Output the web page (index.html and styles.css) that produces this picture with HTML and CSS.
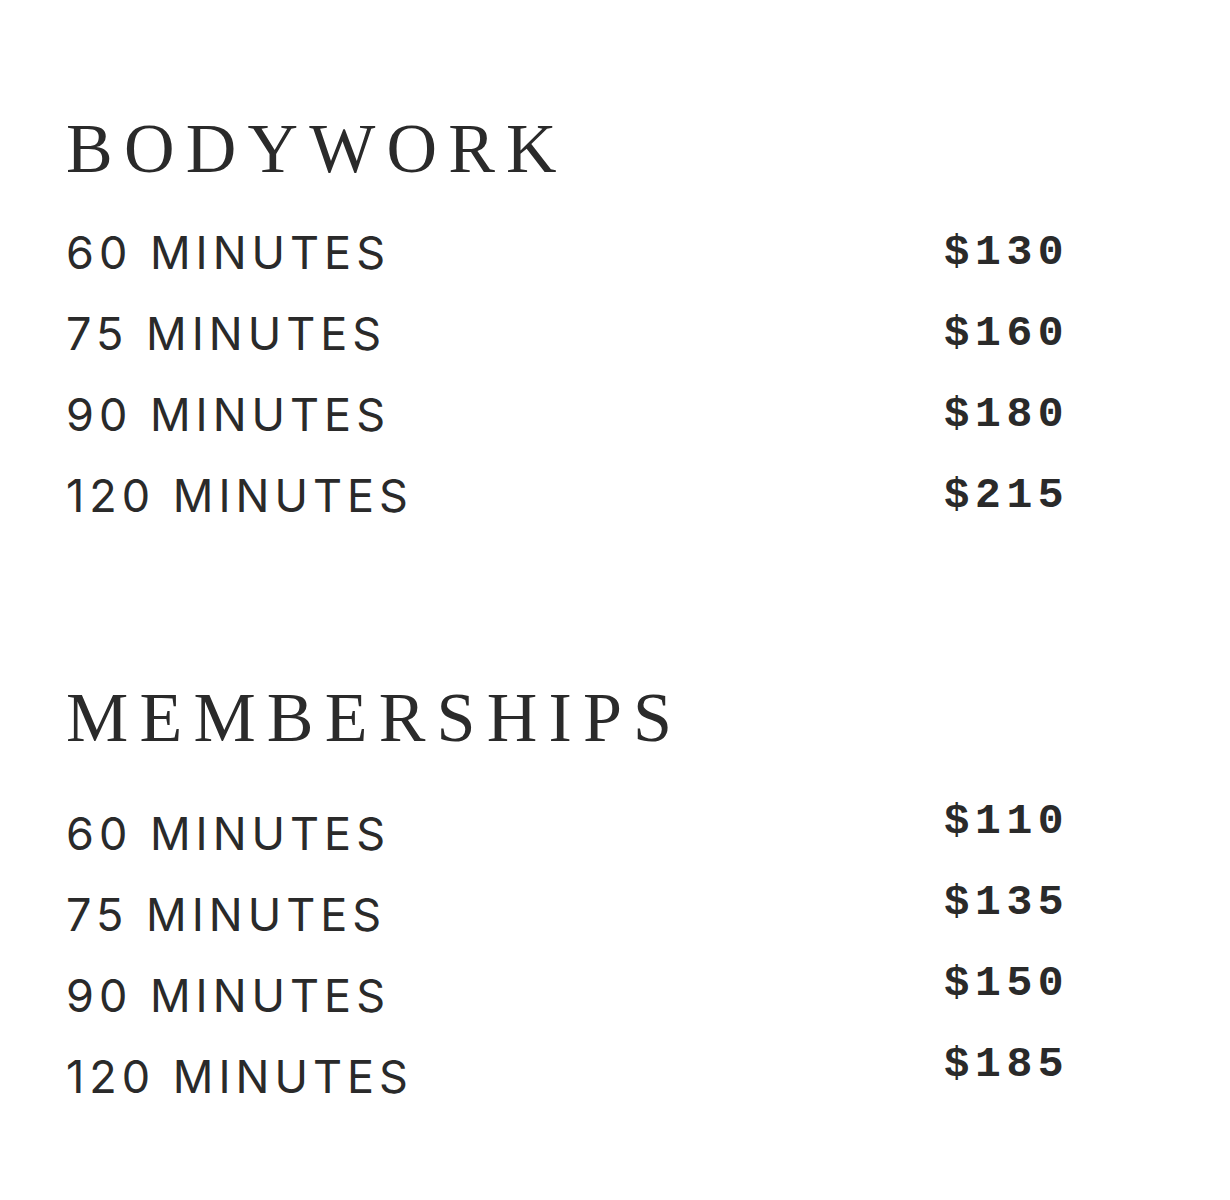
FILE: index.html
```html
<!DOCTYPE html>
<html lang="en">
<head>
<meta charset="utf-8">
<title>Pricing</title>
<link rel="stylesheet" href="styles.css">
</head>
<body>
<main class="menu">
  <section class="section">
    <h2 class="title">BODYWORK</h2>
    <div class="rows">
      <div class="row"><span class="label">60 MINUTES</span><span class="price">$130</span></div>
      <div class="row"><span class="label">75 MINUTES</span><span class="price">$160</span></div>
      <div class="row"><span class="label">90 MINUTES</span><span class="price">$180</span></div>
      <div class="row"><span class="label">120 MINUTES</span><span class="price">$215</span></div>
    </div>
  </section>
  <section class="section section--members">
    <h2 class="title">MEMBERSHIPS</h2>
    <div class="rows">
      <div class="row"><span class="label">60 MINUTES</span><span class="price">$110</span></div>
      <div class="row"><span class="label">75 MINUTES</span><span class="price">$135</span></div>
      <div class="row"><span class="label">90 MINUTES</span><span class="price">$150</span></div>
      <div class="row"><span class="label">120 MINUTES</span><span class="price">$185</span></div>
    </div>
  </section>
</main>
</body>
</html>
```
FILE: styles.css
```css
html, body {
  margin: 0;
  padding: 0;
  background: #ffffff;
}
body {
  color: #2a2a2a;
}
.menu {
  padding: 113px 0 0 66px;
  width: 1003px;
}
.section--members {
  margin-top: 135px;
}
.title {
  margin: 0;
  font-family: "Liberation Serif", serif;
  font-weight: 400;
  font-size: 70px;
  line-height: 72px;
  letter-spacing: 11.2px;
  color: #2a2a2a;
}
.rows {
  margin-top: 38px;
}
.row {
  display: flex;
  justify-content: space-between;
  align-items: flex-start;
  height: 81px;
}
.label {
  font-family: "Inter", sans-serif;
  font-weight: 400;
  font-size: 45px;
  line-height: 60px;
  letter-spacing: 5px;
  color: #2a2a2a;
}
.price {
  font-family: "Liberation Mono", monospace;
  font-weight: 700;
  font-size: 43px;
  line-height: 60px;
  letter-spacing: 5.5px;
  color: #2a2a2a;
}
.section--members .label {
  margin-top: 12px;
}
```
